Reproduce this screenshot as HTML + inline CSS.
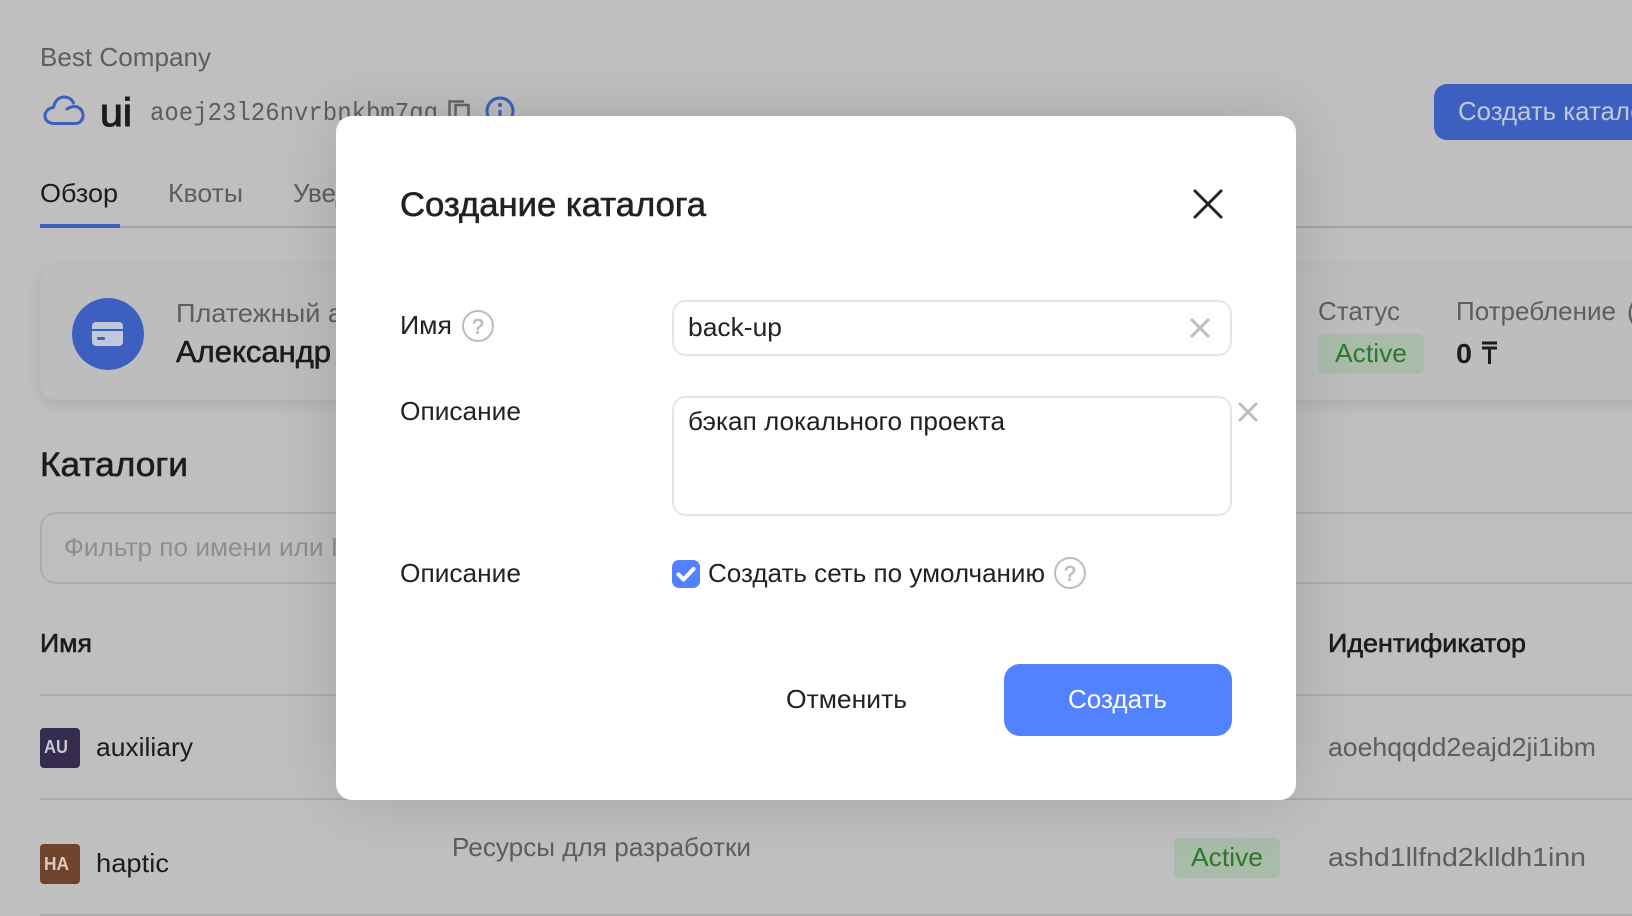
<!DOCTYPE html>
<html lang="ru">
<head>
<meta charset="utf-8">
<title>Создание каталога</title>
<style>
html,body{margin:0;padding:0;width:1632px;height:916px;overflow:hidden;background:#bfbfbf}
body{position:relative;font-family:"Liberation Sans","DejaVu Sans",sans-serif}
svg{position:absolute;left:0;top:0;display:block}
text{font-family:"Liberation Sans","DejaVu Sans",sans-serif;font-size:26px}
.bx{position:absolute;box-sizing:border-box}
.d{fill:#1c1c1c}
.g{fill:#5e5e5e}
.b{stroke-width:.6px}
.k{fill:#222}
</style>
</head>
<body>
<div class="bx" style="left:1434px;top:84px;width:260px;height:56px;background:#3d60c0;border-radius:13px"></div>
<div class="bx" style="left:40px;top:226px;width:1592px;height:2px;background:#a3a3a3"></div>
<div class="bx" style="left:40px;top:224px;width:80px;height:4px;background:#3d60c0"></div>
<div class="bx" style="left:40px;top:268px;width:1640px;height:132px;background:#bdbdbd;border-radius:16px;box-shadow:0 4px 16px rgba(0,0,0,.1)"></div>
<div class="bx" style="left:72px;top:298px;width:72px;height:72px;background:#3d60c0;border-radius:50%"></div>
<div class="bx" style="left:1318px;top:334px;width:106px;height:40px;background:#a9bba9;border-radius:6px"></div>
<div class="bx" style="left:40px;top:512px;width:1640px;height:72px;border:2px solid #adadad;border-radius:16px"></div>
<div class="bx" style="left:40px;top:694px;width:1592px;height:2px;background:#adadad"></div>
<div class="bx" style="left:40px;top:798px;width:1592px;height:2px;background:#adadad"></div>
<div class="bx" style="left:40px;top:914px;width:1592px;height:2px;background:#adadad"></div>
<div class="bx" style="left:40px;top:728px;width:40px;height:40px;background:#352b4f;border-radius:4px"></div>
<div class="bx" style="left:40px;top:844px;width:40px;height:40px;background:#70442c;border-radius:4px"></div>
<div class="bx" style="left:1174px;top:838px;width:106px;height:40px;background:#a9bba9;border-radius:6px"></div>

<svg width="1632" height="916" viewBox="0 0 1632 916">
  <text x="40" y="66" class="g" textLength="171" lengthAdjust="spacingAndGlyphs">Best Company</text>
  <path d="M54 123.500H75.500C80 123.500 83 119.500 83 115.500C83 110 79 106.500 74.500 106.500C72 106.500 69.500 107.500 67 109M73.500 103C72 99.500 68.500 97 64 97C58.500 97 54.500 101.500 53.500 107.500C48.500 108 45 111.500 45 116C45 120.500 49 123.500 54 123.500" fill="none" stroke="#3d60c0" stroke-width="3" stroke-linejoin="round" stroke-linecap="round"/>
  <text x="100" y="126" class="d" stroke="#1c1c1c" stroke-width="1.1" style="font-size:40px" textLength="32" lengthAdjust="spacingAndGlyphs">ui</text>
  <text x="150" y="120" fill="#5e5e5e" style="font-size:26px;font-family:'Liberation Mono',monospace" textLength="288" lengthAdjust="spacingAndGlyphs">aoej23l26nvrbnkbm7gg</text>
  <path d="M455.500 116V105H468.500V116M449.500 116V101.500H464" fill="none" stroke="#666" stroke-width="2.500"/>
  <circle cx="500" cy="111" r="13" fill="none" stroke="#3d60c0" stroke-width="3"/>
  <circle cx="500" cy="105" r="2" fill="#3d60c0"/>
  <path d="M500 110V118" stroke="#3d60c0" stroke-width="3"/>
  <text x="1458" y="120" fill="#c0c8dc" textLength="196" lengthAdjust="spacingAndGlyphs">Создать каталог</text>

  <text x="40" y="202" class="d" textLength="78" lengthAdjust="spacingAndGlyphs">Обзор</text>
  <text x="168" y="202" class="g" textLength="75" lengthAdjust="spacingAndGlyphs">Квоты</text>
  <text x="293" y="202" class="g" textLength="162" lengthAdjust="spacingAndGlyphs">Уведомления</text>

  <rect x="92" y="322" width="31" height="24" rx="4" fill="#c0c8dc"/>
  <rect x="92" y="329" width="31" height="2" fill="#3d60c0"/>
  <rect x="97" y="337" width="8" height="3" rx="1.500" fill="#3d60c0"/>
  <text x="176" y="322" class="g" textLength="247" lengthAdjust="spacingAndGlyphs">Платежный аккаунт</text>
  <text x="176" y="362" class="d b" stroke="#1c1c1c" style="font-size:31px" textLength="155" lengthAdjust="spacingAndGlyphs">Александр</text>
  <text x="1318" y="320" class="g" textLength="82" lengthAdjust="spacingAndGlyphs">Статус</text>
  <text x="1335" y="362" fill="#2b7a2b" textLength="72" lengthAdjust="spacingAndGlyphs">Active</text>
  <text x="1456" y="320" class="g" textLength="160" lengthAdjust="spacingAndGlyphs">Потребление</text>
  <text x="1627" y="320" class="g">(</text>
  <text x="1456" y="363" class="d" style="font-size:28px;font-weight:bold" textLength="16" lengthAdjust="spacingAndGlyphs">0</text>
  <path d="M1482 343H1497M1482 348H1497M1489.500 348V364" stroke="#1c1c1c" stroke-width="3" fill="none"/>

  <text x="40" y="476" class="d b" stroke="#1c1c1c" style="font-size:34px" textLength="148" lengthAdjust="spacingAndGlyphs">Каталоги</text>
  <text x="64" y="556" fill="#8e8e8e" textLength="293" lengthAdjust="spacingAndGlyphs">Фильтр по имени или ID</text>

  <text x="40" y="652" class="d b" stroke="#1c1c1c" textLength="52" lengthAdjust="spacingAndGlyphs">Имя</text>
  <text x="1328" y="652" class="d b" stroke="#1c1c1c" textLength="198" lengthAdjust="spacingAndGlyphs">Идентификатор</text>

  <text x="44" y="753" fill="#c8c8d0" style="font-size:18px;font-weight:bold" textLength="24" lengthAdjust="spacingAndGlyphs">AU</text>
  <text x="96" y="756" class="d" textLength="97" lengthAdjust="spacingAndGlyphs">auxiliary</text>
  <text x="1328" y="756" class="g" textLength="268" lengthAdjust="spacingAndGlyphs">aoehqqdd2eajd2ji1ibm</text>

  <text x="44" y="870" fill="#d8ccc4" style="font-size:18px;font-weight:bold" textLength="25" lengthAdjust="spacingAndGlyphs">HA</text>
  <text x="96" y="872" class="d" textLength="73" lengthAdjust="spacingAndGlyphs">haptic</text>
  <text x="452" y="856" class="g" textLength="299" lengthAdjust="spacingAndGlyphs">Ресурсы для разработки</text>
  <text x="1191" y="866" fill="#2b7a2b" textLength="72" lengthAdjust="spacingAndGlyphs">Active</text>
  <text x="1328" y="866" class="g" textLength="258" lengthAdjust="spacingAndGlyphs">ashd1llfnd2klldh1inn</text>
</svg>

<div class="bx" style="left:336px;top:116px;width:960px;height:684px;background:#fff;border-radius:16px;box-shadow:0 0 64px rgba(0,0,0,.14)"></div>
<div class="bx" style="left:672px;top:300px;width:560px;height:56px;border:2px solid #e6e6e6;border-radius:14px;background:#fff"></div>
<div class="bx" style="left:672px;top:396px;width:560px;height:120px;border:2px solid #e6e6e6;border-radius:14px;background:#fff"></div>
<div class="bx" style="left:672px;top:560px;width:28px;height:28px;background:#5282ff;border-radius:7px"></div>
<div class="bx" style="left:1004px;top:664px;width:228px;height:72px;background:#5282ff;border-radius:16px"></div>

<svg width="1632" height="916" viewBox="0 0 1632 916">
  <text x="400" y="216" class="k b" stroke="#222" style="font-size:34px" textLength="306" lengthAdjust="spacingAndGlyphs">Создание каталога</text>
  <path d="M1195 191L1221 217M1221 191L1195 217" stroke="#222" stroke-width="3" stroke-linecap="round" fill="none"/>

  <text x="400" y="334" class="k" textLength="52" lengthAdjust="spacingAndGlyphs">Имя</text>
  <circle cx="478" cy="326" r="15" fill="none" stroke="#bdbdbd" stroke-width="2"/>
  <text x="478" y="333.500" text-anchor="middle" fill="#bdbdbd" stroke="#bdbdbd" stroke-width=".7" style="font-size:21px">?</text>
  <text x="688" y="336" class="k" textLength="94" lengthAdjust="spacingAndGlyphs">back-up</text>
  <path d="M1191 319L1209 337M1209 319L1191 337" stroke="#bdbdbd" stroke-width="3" fill="none"/>

  <text x="400" y="420" class="k" textLength="121" lengthAdjust="spacingAndGlyphs">Описание</text>
  <text x="688" y="430" class="k" textLength="317" lengthAdjust="spacingAndGlyphs">бэкап локального проекта</text>
  <path d="M1239 403L1257 421M1257 403L1239 421" stroke="#bdbdbd" stroke-width="3" fill="none"/>

  <text x="400" y="582" class="k" textLength="121" lengthAdjust="spacingAndGlyphs">Описание</text>
  <path d="M678.500 574.500L683.500 579.500L693.500 569" stroke="#fff" stroke-width="4" fill="none" stroke-linecap="round" stroke-linejoin="round"/>
  <text x="708" y="582" class="k" textLength="337" lengthAdjust="spacingAndGlyphs">Создать сеть по умолчанию</text>
  <circle cx="1070" cy="573" r="15" fill="none" stroke="#bdbdbd" stroke-width="2"/>
  <text x="1070" y="580.500" text-anchor="middle" fill="#bdbdbd" stroke="#bdbdbd" stroke-width=".7" style="font-size:21px">?</text>

  <text x="786" y="708" class="k" textLength="121" lengthAdjust="spacingAndGlyphs">Отменить</text>
  <text x="1068" y="708" fill="#fff" textLength="99" lengthAdjust="spacingAndGlyphs">Создать</text>
</svg>
</body>
</html>
